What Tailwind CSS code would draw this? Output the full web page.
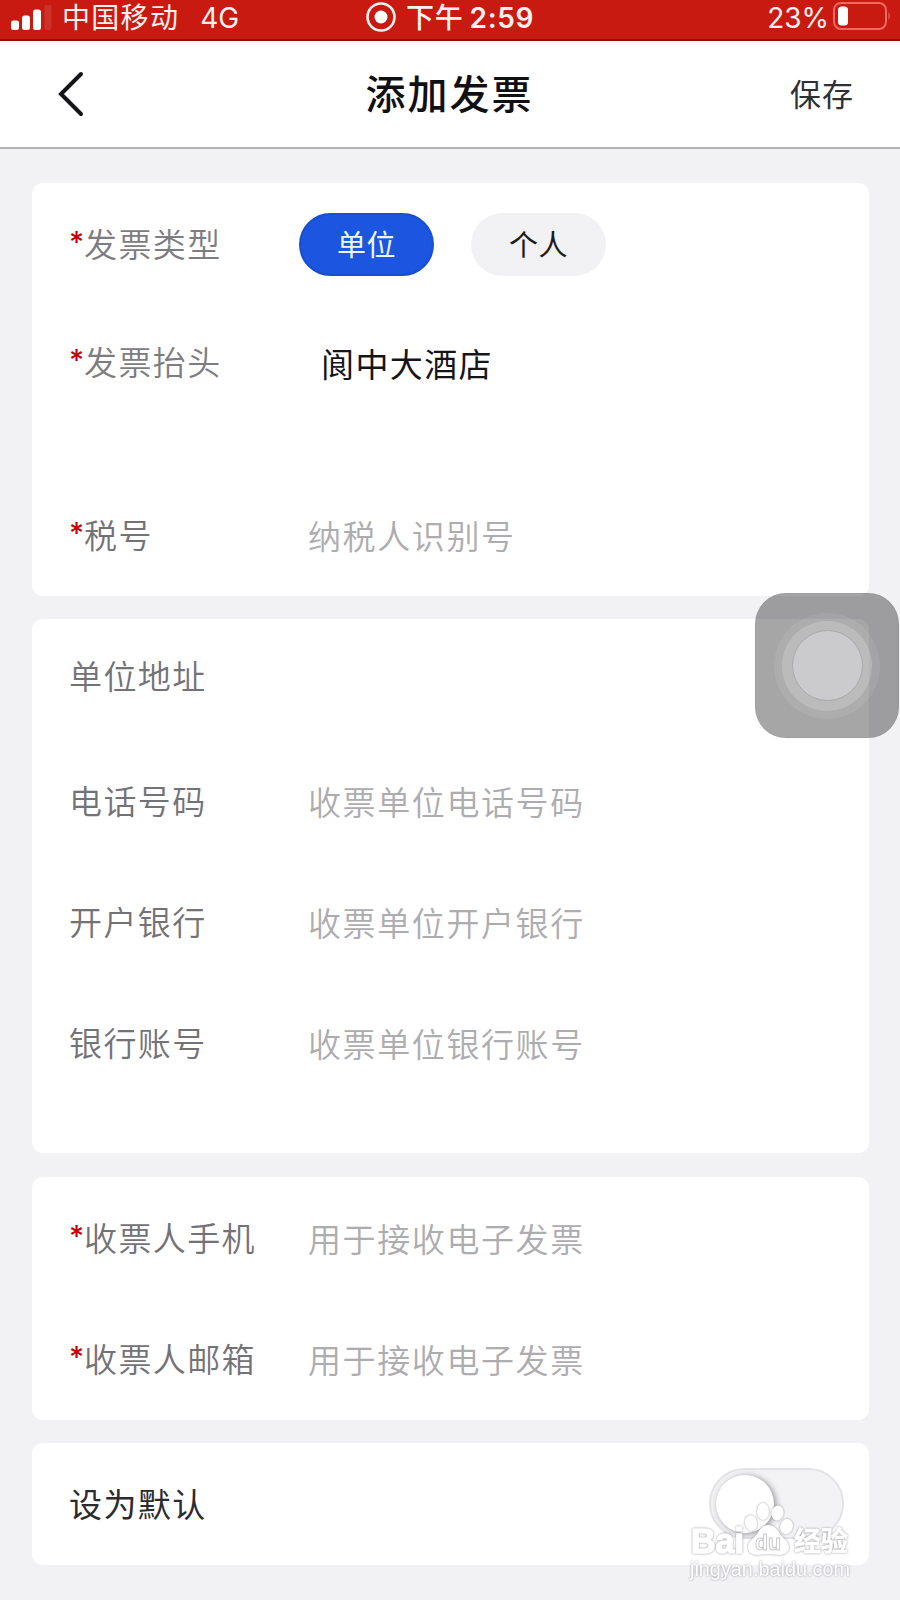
<!DOCTYPE html>
<html lang="zh-CN">
<head>
    <meta charset="UTF-8">
    <meta name="viewport" content="width=device-width, initial-scale=1.0">
    <title>添加发票</title>
    <script src="https://cdn.jsdelivr.net/npm/@tailwindcss/browser@4"></script>
    <style>
        body {
            font-family: Inter, 'Noto Sans CJK SC', sans-serif;
        }
    </style>
</head>
<body class="bg-[#f2f1f4]">
    <div class="relative w-[900px] h-[1600px] overflow-hidden">

        <!-- Status bar -->
        <div class="flex items-center justify-between h-[41px] pl-[11px] pr-[9px] pb-[6px] bg-[#c91a12] border-b-2 border-[#8f0f0a] text-[28px] leading-none whitespace-nowrap text-[#fff1ee]">
            <div class="flex items-center w-[355px]">
                <svg class="w-[42px] h-[28px]" viewBox="0 0 42 28">
                    <rect x="0" y="17.500" width="8" height="9.500" rx="2.500" fill="#fff"/>
                    <rect x="11" y="12.500" width="8" height="14.500" rx="2.500" fill="#fff"/>
                    <rect x="22" y="6.500" width="8" height="20.500" rx="2.500" fill="#fff"/>
                    <rect x="33.500" y="2" width="7" height="25" rx="2" fill="#fff" fill-opacity=".1"/>
                </svg>
                <span class="ml-[9px] pt-[3px] tracking-[1.3px]">中国移动</span>
                <span class="ml-[21px] pt-[2px]">4G</span>
            </div>
            <div class="flex items-center flex-1">
                <svg class="w-[30px] h-[30px]" viewBox="0 0 30 30">
                    <circle cx="15" cy="15" r="13.500" fill="none" stroke="#fff1ee" stroke-width="2.600"/>
                    <circle cx="15" cy="15" r="6.500" fill="#fff"/>
                </svg>
                <span class="ml-[10px] pt-[3px] font-medium tracking-[0.8px]">下午</span>
                <span class="ml-[6px] pt-[2px] font-semibold tracking-[0.6px]">2:59</span>
            </div>
            <div class="flex items-center">
                <span class="pt-[2px]">23%</span>
                <svg class="ml-[4px] -mt-[1px] w-[58px] h-[28px]" viewBox="0 0 58 28">
                    <rect x="1" y="1" width="52" height="26" rx="7" fill="none" stroke="#f0685f" stroke-width="2"/>
                    <rect x="5" y="4.500" width="10" height="19" rx="3.500" fill="#fff"/>
                    <path d="M55.500 10v8q2.500-4 0-8z" fill="#f0685f"/>
                </svg>
            </div>
        </div>

        <!-- Title bar -->
        <header class="flex items-center justify-between h-[108px] pl-[58px] pr-[46px] bg-white border-b-2 border-[#b3b2b5]">
            <svg class="w-[51px] h-[46px]" viewBox="0 0 51 46" fill="none" stroke="#141419" stroke-width="4" stroke-linecap="round" stroke-linejoin="miter">
                <path d="M23 3L3 23l20 20"/>
            </svg>
            <h1 class="pt-[2px] text-[40px] leading-none font-medium tracking-[2px] text-[#101014]">添加发票</h1>
            <button class="w-[64px] text-[31px] leading-none tracking-[1px] whitespace-nowrap text-[#2f2f35]">保存</button>
        </header>

        <main class="flex flex-col px-8 pt-[34px] pr-[31px] text-[33px] leading-none font-[350] tracking-[1.4px] text-[#737277] whitespace-nowrap">
            <!-- Invoice type, title and tax number -->
            <section class="h-[413px] pt-[32px] pl-[37px] rounded-[11px] bg-white">
                <div class="flex items-center h-[60px]">
                    <div class="flex w-[230px] text-[#7d7c81]"><span class="w-[15px] -mt-[2px] text-[29px] font-medium tracking-normal text-[#c4000a]">*</span>发票类型</div>
                    <div class="flex gap-[37px] -mt-[1px] text-[29px] font-normal tracking-[0.6px]">
                        <button class="w-[135px] h-[63px] pt-[2px] rounded-full bg-[#1b55e0] border-2 border-[#174fcf] text-[#eef5ff]">单位</button>
                        <button class="w-[135px] h-[63px] pt-[2px] rounded-full bg-[#f2f1f4] text-[#1c1c20]">个人</button>
                    </div>
                </div>
                <div class="flex items-center h-[60px] mt-[58px]">
                    <div class="flex w-[252px] text-[#7d7c81]"><span class="w-[15px] -mt-[2px] text-[29px] font-medium tracking-normal text-[#c4000a]">*</span>发票抬头</div>
                    <span class="pt-[5px] font-normal text-[#16161a]">阆中大酒店</span>
                </div>
                <div class="flex items-center h-[60px] mt-[113px]">
                    <div class="flex w-[239px]"><span class="w-[15px] -mt-[2px] text-[29px] font-medium tracking-normal text-[#c4000a]">*</span>税号</div>
                    <span class="pt-[2px] tracking-[1.6px] text-[#adacaf]">纳税人识别号</span>
                </div>
            </section>

            <!-- Company details -->
            <section class="h-[534px] mt-[23px] pt-[28px] pl-[37px] rounded-[11px] bg-white">
                <div class="flex items-center h-[60px]">
                    <div class="w-[239px]">单位地址</div>
                </div>
                <div class="flex items-center h-[60px] mt-[65px]">
                    <div class="w-[239px]">电话号码</div>
                    <span class="pt-[3px] tracking-[1.6px] text-[#adacaf]">收票单位电话号码</span>
                </div>
                <div class="flex items-center h-[60px] mt-[61px]">
                    <div class="w-[239px]">开户银行</div>
                    <span class="pt-[3px] tracking-[1.6px] text-[#adacaf]">收票单位开户银行</span>
                </div>
                <div class="flex items-center h-[60px] mt-[61px]">
                    <div class="w-[239px]">银行账号</div>
                    <span class="pt-[3px] tracking-[1.6px] text-[#adacaf]">收票单位银行账号</span>
                </div>
            </section>

            <!-- Recipient -->
            <section class="h-[243px] mt-[24px] pt-[32px] pl-[37px] rounded-[11px] bg-white">
                <div class="flex items-center h-[60px]">
                    <div class="flex w-[239px]"><span class="w-[15px] -mt-[2px] text-[29px] font-medium tracking-normal text-[#c4000a]">*</span>收票人手机</div>
                    <span class="pt-[2px] tracking-[1.6px] text-[#adacaf]">用于接收电子发票</span>
                </div>
                <div class="flex items-center h-[60px] mt-[61px]">
                    <div class="flex w-[239px]"><span class="w-[15px] -mt-[2px] text-[29px] font-medium tracking-normal text-[#c4000a]">*</span>收票人邮箱</div>
                    <span class="pt-[2px] tracking-[1.6px] text-[#adacaf]">用于接收电子发票</span>
                </div>
            </section>

            <!-- Default switch -->
            <section class="flex items-center justify-between h-[122px] mt-[23px] pl-[37px] pr-[25px] rounded-[11px] bg-white">
                <span class="pt-[2px] font-normal text-[#2b2b30]">设为默认</span>
                <div class="w-[135px] h-[71px] -mt-[2px] p-[5px] rounded-full bg-[#f3f2f5] border-2 border-[#e3e2e5]">
                    <div class="w-[58px] h-[58px] rounded-full bg-white shadow-[2px_1px_6px_rgba(0,0,0,0.4)]"></div>
                </div>
            </section>
        </main>

        <!-- AssistiveTouch button -->
        <div class="absolute left-[755px] top-[593px] flex items-center justify-center w-[144px] h-[145px] rounded-[31px] bg-black/35 border border-black/5">
            <div class="flex items-center justify-center w-[106px] h-[106px] rounded-full bg-white/8">
                <div class="flex items-center justify-center w-[90px] h-[90px] rounded-full bg-white/18">
                    <div class="w-[71px] h-[71px] rounded-full bg-[#cbcacd] border border-[#aaa9ab]"></div>
                </div>
            </div>
        </div>

        <!-- Watermark -->
        <svg class="absolute left-[684px] top-[1496px] w-[180px] h-[90px] drop-shadow-[0_0_1px_rgba(120,118,125,0.75)]" viewBox="684 1496 180 90" fill="#fff">
            <g stroke="#fff" stroke-width="1.500" stroke-linejoin="round" font-weight="700">
                <text x="691" y="1553" font-size="35" font-family="Liberation Sans" textLength="53" lengthAdjust="spacingAndGlyphs">Bai</text>
                <text x="794" y="1551" font-size="27" font-family="Noto Sans CJK SC" textLength="54" stroke-width=".6">经验</text>
            </g>
            <ellipse cx="751" cy="1523" rx="6" ry="8" transform="rotate(-12 751 1523)"/>
            <ellipse cx="763" cy="1511.500" rx="6" ry="8.500"/>
            <ellipse cx="777.500" cy="1513" rx="6" ry="7.500" transform="rotate(14 777.5 1513)"/>
            <ellipse cx="786.500" cy="1526.500" rx="6.300" ry="7.700" transform="rotate(14 786.5 1526.5)"/>
            <path d="M768 1525c6 0 9 4 12 9 4 5 9 8 9 13 0 6-5 8-10 8-4 0-7-1-11-1s-7 1-11 1c-5 0-9-3-9-8s5-8 9-13c3-5 6-9 11-9z"/>
            <text x="755" y="1550" font-family="Liberation Sans" font-weight="700" font-size="22" textLength="26" lengthAdjust="spacingAndGlyphs" stroke="#c9c8cb" stroke-width="1">du</text>
            <text x="690" y="1575.500" font-family="Liberation Sans" font-size="19.500" textLength="160" lengthAdjust="spacingAndGlyphs">jingyan.baidu.com</text>
        </svg>
    </div>
</body>
</html>
